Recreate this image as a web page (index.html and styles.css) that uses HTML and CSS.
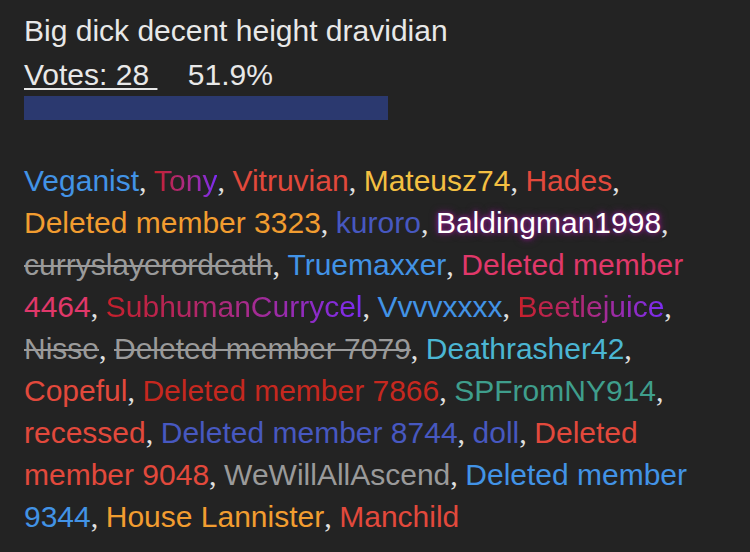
FILE: index.html
```html
<!DOCTYPE html>
<html>
<head>
<meta charset="utf-8">
<link rel="stylesheet" href="styles.css">
</head>
<body>
<div class="poll-result">
  <div class="option-title">Big dick decent height dravidian</div>
  <div class="option-stats">
    <span class="votes">Votes: 28 </span>
    <span class="percent">51.9%</span>
  </div>
  <div class="bar-track"><div class="bar-fill" style="width: 364px"></div></div>

  <div class="voters">
    <span class="u blue">Veganist</span><span class="sep">, </span>
    <span class="u grad">Tony</span><span class="sep">, </span>
    <span class="u red">Vitruvian</span><span class="sep">, </span>
    <span class="u yellow">Mateusz74</span><span class="sep">, </span>
    <span class="u red">Hades</span><span class="sep">, </span>
    <span class="u orange">Deleted member 3323</span><span class="sep">, </span>
    <span class="u indigo">kuroro</span><span class="sep">, </span>
    <span class="u glow">Baldingman1998</span><span class="sep">, </span>
    <span class="u banned">curryslayerordeath</span><span class="sep">, </span>
    <span class="u blue">Truemaxxer</span><span class="sep">, </span>
    <span class="u pink">Deleted member 4464</span><span class="sep">, </span>
    <span class="u grad">SubhumanCurrycel</span><span class="sep">, </span>
    <span class="u blue">Vvvvxxxx</span><span class="sep">, </span>
    <span class="u grad">Beetlejuice</span><span class="sep">, </span>
    <span class="u banned">Nisse</span><span class="sep">, </span>
    <span class="u banned">Deleted member 7079</span><span class="sep">, </span>
    <span class="u cyan">Deathrasher42</span><span class="sep">, </span>
    <span class="u red">Copeful</span><span class="sep">, </span>
    <span class="u darkred">Deleted member 7866</span><span class="sep">, </span>
    <span class="u teal">SPFromNY914</span><span class="sep">, </span>
    <span class="u red">recessed</span><span class="sep">, </span>
    <span class="u indigo">Deleted member 8744</span><span class="sep">, </span>
    <span class="u indigo">doll</span><span class="sep">, </span>
    <span class="u red">Deleted member 9048</span><span class="sep">, </span>
    <span class="u gray">WeWillAllAscend</span><span class="sep">, </span>
    <span class="u blue">Deleted member 9344</span><span class="sep">, </span>
    <span class="u orange">House Lannister</span><span class="sep">, </span>
    <span class="u red">Manchild</span>
  </div>
</div>
</body>
</html>
```

FILE: styles.css
```css
html, body {
  margin: 0;
  padding: 0;
  background: #232323;
}

body {
  font-family: "Liberation Sans", Arial, sans-serif;
  color: #e8e8e8;
  font-size: 30px;
}

.poll-result {
  padding: 13px 24px 0 24px;
}

.option-title {
  line-height: 36px;
}

.option-stats {
  line-height: 36px;
  margin-top: 8px;
}

.votes {
  text-decoration: underline;
  text-decoration-thickness: 2px;
  text-underline-offset: 3px;
  white-space: pre;
}

.percent {
  margin-left: 22px;
}

.bar-track {
  margin-top: 3px;
  height: 24px;
}

.bar-fill {
  height: 100%;
  background: #2b396f;
}

.voters {
  margin-top: 40px;
  line-height: 42px;
}

.sep {
  font-family: "Liberation Serif", "Times New Roman", serif;
  color: #e0e0e0;
}

.blue { color: #4293e6; }
.red { color: #e2493c; }
.darkred { color: #c6281f; }
.yellow { color: #f4c042; }
.orange { color: #f29d30; }
.indigo { color: #4758c0; }
.pink { color: #e0386a; }
.cyan { color: #4bb6d3; }
.teal { color: #3f9e8c; }
.gray { color: #9a9a9a; }

.banned {
  color: #9a9a9a;
  text-decoration: line-through;
  text-decoration-thickness: 2px;
}

.grad {
  background: linear-gradient(90deg, #c7202a 0%, #a72b8c 55%, #7a2cf2 100%);
  -webkit-background-clip: text;
  background-clip: text;
  color: transparent;
}

.glow {
  color: #ffffff;
  text-shadow: 0 0 4px #8a1c8a, 0 0 8px #7a167a;
}
```
